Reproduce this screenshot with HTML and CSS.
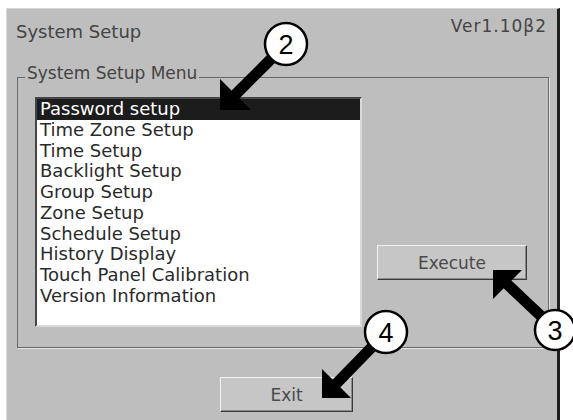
FILE: index.html
```html
<!DOCTYPE html>
<html lang="en">
<head>
    <meta charset="UTF-8">
    <meta name="viewport" content="width=device-width, initial-scale=1.0">
    <title>System Setup</title>
    <link rel="stylesheet" href="styles.css">
</head>
<body>
<div class="window">
    <div class="header">
        <span class="title">System Setup</span>
        <span class="version">Ver1.10β2</span>
    </div>

    <fieldset class="group">
        <legend>System Setup Menu</legend>
        <ul class="listbox">
            <li class="selected">Password setup</li>
            <li>Time Zone Setup</li>
            <li>Time Setup</li>
            <li>Backlight Setup</li>
            <li>Group Setup</li>
            <li>Zone Setup</li>
            <li>Schedule Setup</li>
            <li>History Display</li>
            <li>Touch Panel Calibration</li>
            <li>Version Information</li>
        </ul>
        <button type="button" class="btn btn-execute">Execute</button>
    </fieldset>

    <button type="button" class="btn btn-exit">Exit</button>
</div>

<!-- callouts drawn over the screenshot -->
<svg class="callouts" width="573" height="420" viewBox="0 0 573 420">
    <g class="arrow">
        <line x1="234" y1="96" x2="272" y2="58"/>
        <polygon points="220,110 220,79 251,110"/>
    </g>
    <g class="arrow">
        <line x1="506" y1="283" x2="542" y2="317"/>
        <polygon points="493,270 493,299 522,270"/>
    </g>
    <g class="arrow">
        <line x1="335" y1="385" x2="372" y2="347"/>
        <polygon points="322,398 322,369 351,398"/>
    </g>

    <circle cx="286" cy="44" r="21"/>
    <text x="286" y="54">2</text>
    <circle cx="555" cy="330" r="20"/>
    <text x="555" y="340">3</text>
    <circle cx="386" cy="332" r="21"/>
    <text x="386" y="342">4</text>
</svg>
</body>
</html>
```

FILE: styles.css
```css
body {
    margin: 0;
    background-color: #ffffff;
    font-family: 'DejaVu Sans', sans-serif;
    color: #333;
}
.window {
    position: relative;
    margin: 8px 0 0 6px;
    width: 550px;
    height: 411px;
    background-color: #bebebe;
    border-top: 1px solid #d6d6d6;
    border-left: 1px solid #d6d6d6;
    border-right: 3px solid #1e1e1e;
}
.header {
    display: flex;
    justify-content: space-between;
    align-items: flex-start;
    height: 54px;
    box-sizing: border-box;
    padding: 7px 10px 0 9px;
}
.title {
    margin-top: 6px;
    font-size: 18px;
    line-height: 20px;
    color: #444;
}
.version {
    font-size: 17px;
    line-height: 20px;
    color: #444;
    letter-spacing: 1px;
}
.group {
    display: flex;
    align-items: flex-end;
    margin: 0 8px 0 10px;
    padding: 6px 20px 20px 17px;
    border: 1px solid #6a6a6a;
    box-shadow: 1px 1px 0 #e4e4e4;
    min-width: 0;
}
.group legend {
    margin-left: -10px;
    padding: 0 2px 8px 2px;
    font-size: 17px;
    line-height: 20px;
    color: #444;
}
.listbox {
    list-style: none;
    margin: 0;
    padding: 0;
    width: 323px;
    height: 226px;
    background-color: #ffffff;
    border-top: 2px solid #454545;
    border-left: 2px solid #454545;
    border-right: 2px solid #dadada;
    border-bottom: 2px solid #dadada;
}
.listbox li {
    padding-left: 3px;
    font-size: 18px;
    line-height: 20.75px;
    color: #2a2a2a;
    white-space: nowrap;
}
.listbox li.selected {
    background-color: #1c1c1c;
    color: #ffffff;
}
.btn {
    font-family: 'DejaVu Sans', sans-serif;
    font-size: 17px;
    color: #4a4a4a;
    background-color: #c6c6c6;
    border: 1px solid;
    border-color: #f2f2f2 #3a3a3a #3a3a3a #f2f2f2;
    box-shadow: inset -1px -1px 0 #8c8c8c;
    padding: 0;
}
.btn-execute {
    width: 150px;
    height: 35px;
    margin: 0 0 47px 15px;
}
.btn-exit {
    display: block;
    width: 133px;
    height: 35px;
    margin: 29px 0 0 213px;
}
.callouts {
    position: absolute;
    top: 0;
    left: 0;
    pointer-events: none;
}
.callouts .arrow line {
    stroke: #000;
    stroke-width: 11;
}
.callouts .arrow polygon {
    fill: #000;
}
.callouts circle {
    fill: #fff;
    stroke: #000;
    stroke-width: 2.5;
}
.callouts text {
    font-family: 'Liberation Sans', Arial, sans-serif;
    font-size: 27px;
    text-anchor: middle;
    fill: #000;
}
```
